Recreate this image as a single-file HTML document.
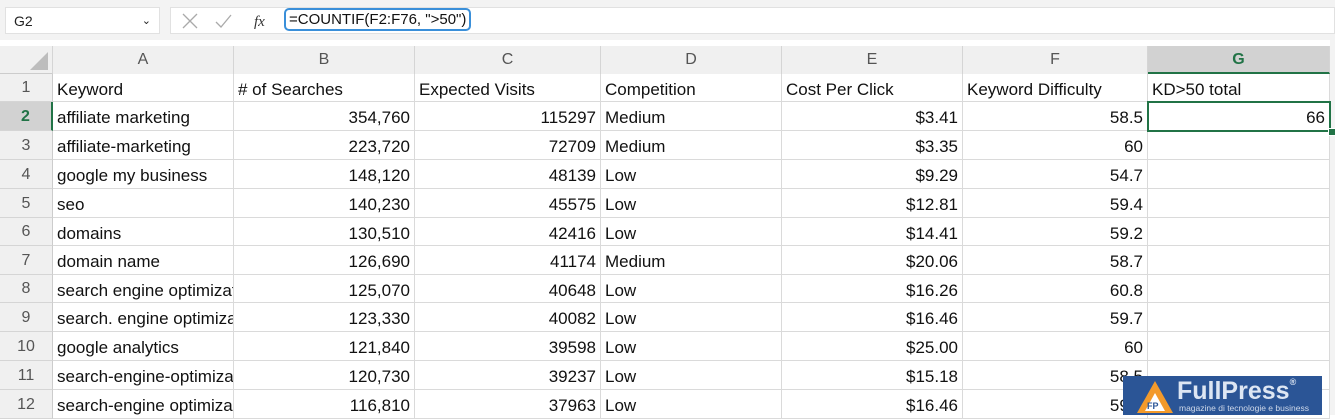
<!DOCTYPE html>
<html><head><style>
body{margin:0;width:1335px;height:415px;overflow:hidden;background:#fff;font-family:"Liberation Sans",sans-serif;position:relative}
.a{position:absolute}
.top{left:0;top:0;width:1335px;height:40px;background:#f3f3f3}
.nb{left:5px;top:7px;width:155px;height:27px;background:#fff;border:1px solid #e1e1e1;box-sizing:border-box;font-size:14px;line-height:26px;padding-left:8px;color:#222}
.fb{left:170px;top:7px;width:1165px;height:27px;background:#fff;border:1px solid #e1e1e1;box-sizing:border-box}
.fx{left:284px;top:8px;height:23px;border:2px solid #3a8fd9;border-radius:5px;box-sizing:border-box;font-size:15px;line-height:19px;padding:0 3px;color:#111;background:#fff}
.hdr{top:46px;height:28px;background:#f0f0f0;font-size:16px;color:#555;text-align:center;line-height:28px;border-right:1px solid #d5d5d5;box-sizing:border-box}
.rh{left:0;width:53px;background:#f0f0f0;font-size:16px;color:#555;text-align:center;border-bottom:1px solid #d5d5d5;border-right:1px solid #ccc;box-sizing:border-box}
.c{font-size:17px;color:#111;border-right:1px solid #dadada;border-bottom:1px solid #dadada;box-sizing:border-box;padding:0 4px;white-space:nowrap;overflow:hidden}
.r{text-align:right}
</style></head><body>
<div class="a top"></div>
<div class="a nb">G2<span style="position:absolute;right:8px;top:0;font-size:11px">&#8964;</span></div>
<div class="a fb">
<svg class="a" style="left:10px;top:5px" width="100" height="17"><path d="M2 1l14 14M16 1L2 15" stroke="#aaa" stroke-width="1.3" fill="none"/><path d="M35 9l5 5 10-12" stroke="#aaa" stroke-width="1.3" fill="none"/><text x="73" y="13" font-family="Liberation Serif" font-style="italic" font-size="15" fill="#333">fx</text></svg>
</div>
<div class="a fx">=COUNTIF(F2:F76, "&gt;50")</div>
<div class="a" style="left:0;top:46px;width:53px;height:28px;background:#f0f0f0;border-right:1px solid #d5d5d5;border-bottom:1px solid #ccc;box-sizing:border-box"><svg width="52" height="27"><path d="M48 24V6L30 24z" fill="#bdbdbd"/></svg></div>
<div id="g"></div>
<div class="a" style="left:1123px;top:376px;width:199px;height:39px;background:#2b5596">
<svg class="a" style="left:12px;top:3px" width="40" height="36"><path d="M20 2L38 34H2z" fill="#f39a2b"/><path d="M20 14L30 32H10z" fill="#fff"/><text x="12" y="30" font-size="9" font-weight="bold" fill="#2b5596" font-family="Liberation Sans">FP</text></svg>
<div class="a" style="left:54px;top:1px;font-size:25px;font-weight:bold;color:#dde6f3">FullPress<sup style="font-size:9px;vertical-align:14px">®</sup></div>
<div class="a" style="left:56px;top:27px;font-size:8.5px;color:#cfd9ea;white-space:nowrap">magazine di tecnologie e business</div>
</div>
<script>
var cols=[53,234,415,601,782,963,1148,1330],L="ABCDEFG";
var tops=[74,102,131,160,189,218,246,275,303,332,361,390,419];
var data=[["Keyword","# of Searches","Expected Visits","Competition","Cost Per Click","Keyword Difficulty","KD>50 total"],
["affiliate marketing","354,760","115297","Medium","$3.41","58.5","66"],
["affiliate-marketing","223,720","72709","Medium","$3.35","60",""],
["google my business","148,120","48139","Low","$9.29","54.7",""],
["seo","140,230","45575","Low","$12.81","59.4",""],
["domains","130,510","42416","Low","$14.41","59.2",""],
["domain name","126,690","41174","Medium","$20.06","58.7",""],
["search engine optimization","125,070","40648","Low","$16.26","60.8",""],
["search. engine optimization","123,330","40082","Low","$16.46","59.7",""],
["google analytics","121,840","39598","Low","$25.00","60",""],
["search-engine-optimization","120,730","39237","Low","$15.18","58.5",""],
["search-engine optimization","116,810","37963","Low","$16.46","59.1",""]];
var h="";
for(var i=0;i<7;i++){var s=i==6?"background:#d2d2d2;color:#217346;font-weight:bold;border-bottom:2px solid #217346;":"";
h+='<div class="a hdr" style="left:'+cols[i]+'px;width:'+(cols[i+1]-cols[i])+'px;'+s+'">'+L[i]+'</div>';}
for(var r=0;r<12;r++){var t=tops[r],ht=tops[r+1]-t;
var s=r==1?"color:#217346;font-weight:bold;background:#d2d2d2;border-right:2px solid #217346;":"";
h+='<div class="a rh" style="top:'+t+'px;height:'+ht+'px;line-height:'+ht+'px;'+s+'">'+(r+1)+'</div>';
for(var c=0;c<7;c++){var al=(r>0&&[1,2,4,5,6].indexOf(c)>=0)?" r":"";
h+='<div class="a c'+al+'" style="left:'+cols[c]+'px;top:'+t+'px;width:'+(cols[c+1]-cols[c])+'px;height:'+ht+'px;line-height:'+(ht+3)+'px">'+data[r][c].replace(/>/g,"&gt;")+'</div>';}}
h+='<div class="a" style="left:1330px;top:40px;width:5px;height:375px;background:#f3f3f3"></div>';
h+='<div class="a" style="left:1147px;top:101px;width:184px;height:31px;border:2px solid #217346;box-sizing:border-box"></div><div class="a" style="left:1328px;top:128px;width:6px;height:6px;background:#217346;border:1px solid #fff"></div>';
document.getElementById("g").innerHTML=h;
</script>
</body></html>
